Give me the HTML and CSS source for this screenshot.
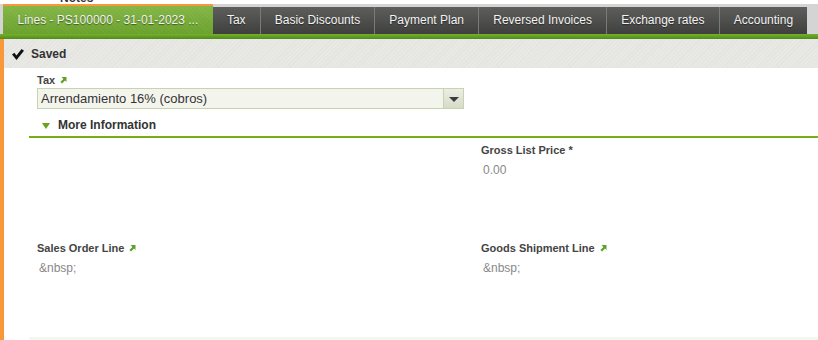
FILE: index.html
```html
<!DOCTYPE html>
<html lang="en">
<head>
  <meta charset="UTF-8">
  <title>Lines</title>
  <link rel="stylesheet" href="styles.css">
</head>
<body>
  <div class="prev-section">
    <span class="prev-title">Notes</span>
  </div>

  <div class="tabbar">
    <div class="tab tab-active">Lines - PS100000 - 31-01-2023 ...</div>
    <div class="tab">Tax</div>
    <div class="tab">Basic Discounts</div>
    <div class="tab">Payment Plan</div>
    <div class="tab">Reversed Invoices</div>
    <div class="tab">Exchange rates</div>
    <div class="tab">Accounting</div>
  </div>
  <div class="tabbar-line"></div>

  <div class="pane">
    <div class="status">
      <svg class="check" width="12" height="11" viewBox="0 0 12 11">
        <path d="M0 5.6 L2.4 3.8 L4.4 6.4 L9.6 0 L12 1.8 L4.5 11 Z" fill="#111"/>
      </svg>
      <span>Saved</span>
    </div>

    <div class="form">
      <div class="field field-wide">
        <div class="label">Tax <svg class="link" width="7" height="8" viewBox="0 0 7 8"><path d="M1.5 1 H6.5 V6 L5 4.6 L2 7.6 L0.4 6 L3.4 3 Z" fill="#5da12a"/></svg></div>
        <div class="select">
          <span class="select-value">Arrendamiento 16% (cobros)</span>
          <span class="select-btn"><span class="caret"></span></span>
        </div>
      </div>

      <div class="section-head">
        <span class="section-tri"></span>
        <span>More Information</span>
      </div>

      <div class="grid">
        <div class="field"></div>
        <div class="field">
          <div class="label">Gross List Price *</div>
          <div class="value">0.00</div>
        </div>
        <div class="field">
          <div class="label">Sales Order Line <svg class="link" width="7" height="8" viewBox="0 0 7 8"><path d="M1.5 1 H6.5 V6 L5 4.6 L2 7.6 L0.4 6 L3.4 3 Z" fill="#5da12a"/></svg></div>
          <div class="value">&amp;nbsp;</div>
        </div>
        <div class="field">
          <div class="label">Goods Shipment Line <svg class="link" width="7" height="8" viewBox="0 0 7 8"><path d="M1.5 1 H6.5 V6 L5 4.6 L2 7.6 L0.4 6 L3.4 3 Z" fill="#5da12a"/></svg></div>
          <div class="value">&amp;nbsp;</div>
        </div>
      </div>

      <div class="foot"></div>
    </div>
  </div>
</body>
</html>
```

FILE: styles.css
```css
html, body {
  margin: 0;
  padding: 0;
  background: #fff;
  font-family: 'Liberation Sans', Arial, sans-serif;
  overflow: hidden;
}

.prev-section {
  height: 4px;
  overflow: hidden;
  position: relative;
  background: #fff;
}

.prev-title {
  position: absolute;
  left: 60px;
  top: -9px;
  font-size: 12px;
  font-weight: bold;
  color: #333;
}

.tabbar {
  display: flex;
  align-items: flex-end;
  height: 30px;
  padding-left: 3px;
  background: #d4d4d4;
}

.tab {
  height: 27px;
  line-height: 27px;
  padding: 0 14.1px;
  font-size: 12px;
  color: #f2f2f2;
  text-shadow: 0 1px 1px rgba(0, 0, 0, 0.45);
  background: linear-gradient(#5e5e5c, #3f3f3d);
  border-left: 1px solid #7a7a78;
}

.tab-active {
  height: 28px;
  line-height: 28px;
  padding: 0 14.5px;
  border-left: 0;
  border-top: 2px solid #f7993a;
  background:
    repeating-linear-gradient(45deg, rgba(255,255,255,0.04) 0 1px, transparent 1px 3px),
    linear-gradient(#84b646, #6aa12c);
}

.tab-active + .tab {
  border-left: 0;
}

.tabbar-line {
  height: 5px;
  background: linear-gradient(#77b12a, #4f8a1c);
}

.pane {
  border-left: 4px solid #f7993a;
  min-height: 301px;
}

.status {
  display: flex;
  align-items: center;
  gap: 7px;
  height: 29px;
  padding-left: 8px;
  font-size: 12px;
  font-weight: bold;
  color: #333;
  background:
    repeating-linear-gradient(135deg, rgba(0,0,0,0.02) 0 1px, transparent 1px 3px),
    #e8e9e4;
}

.check {
  margin-top: 1px;
}

.form {
  padding-left: 25px;
}

.field {
  padding-left: 8px;
}

.field-wide {
  padding-top: 5px;
}

.label {
  font-size: 11px;
  font-weight: bold;
  color: #444;
  height: 14px;
  line-height: 14px;
}

.link {
  margin-left: 2px;
}

.select {
  display: flex;
  width: 425px;
  height: 19px;
  margin-top: 1px;
  border: 1px solid #c6d4b0;
  background: #f3f5ec;
}

.select-value {
  flex: 1;
  padding-left: 3px;
  font-size: 13px;
  line-height: 20px;
  color: #333;
}

.select-btn {
  width: 19px;
  display: flex;
  align-items: center;
  justify-content: center;
  border-left: 1px solid #c6d4b0;
  background: linear-gradient(#eceee4, #d8dbc8);
}

.caret {
  width: 0;
  height: 0;
  border-left: 5px solid transparent;
  border-right: 5px solid transparent;
  border-top: 5px solid #3c3c3c;
  margin-top: 2px;
}

.section-head {
  display: flex;
  align-items: center;
  gap: 8px;
  height: 23px;
  padding-top: 4px;
  padding-left: 13px;
  font-size: 12px;
  font-weight: bold;
  color: #333;
  border-bottom: 2px solid #7aac1a;
}

.section-tri {
  width: 0;
  height: 0;
  border-left: 4px solid transparent;
  border-right: 4px solid transparent;
  border-top: 6px solid #6aa21c;
  margin-top: 3px;
}

.grid {
  display: grid;
  grid-template-columns: 444px 1fr;
  grid-template-rows: 98px 96px;
  padding-top: 5px;
}

.value {
  font-size: 12px;
  color: #888;
  padding: 6px 0 0 2px;
}

.foot {
  height: 4px;
  background: #f4f7f0;
}
```
